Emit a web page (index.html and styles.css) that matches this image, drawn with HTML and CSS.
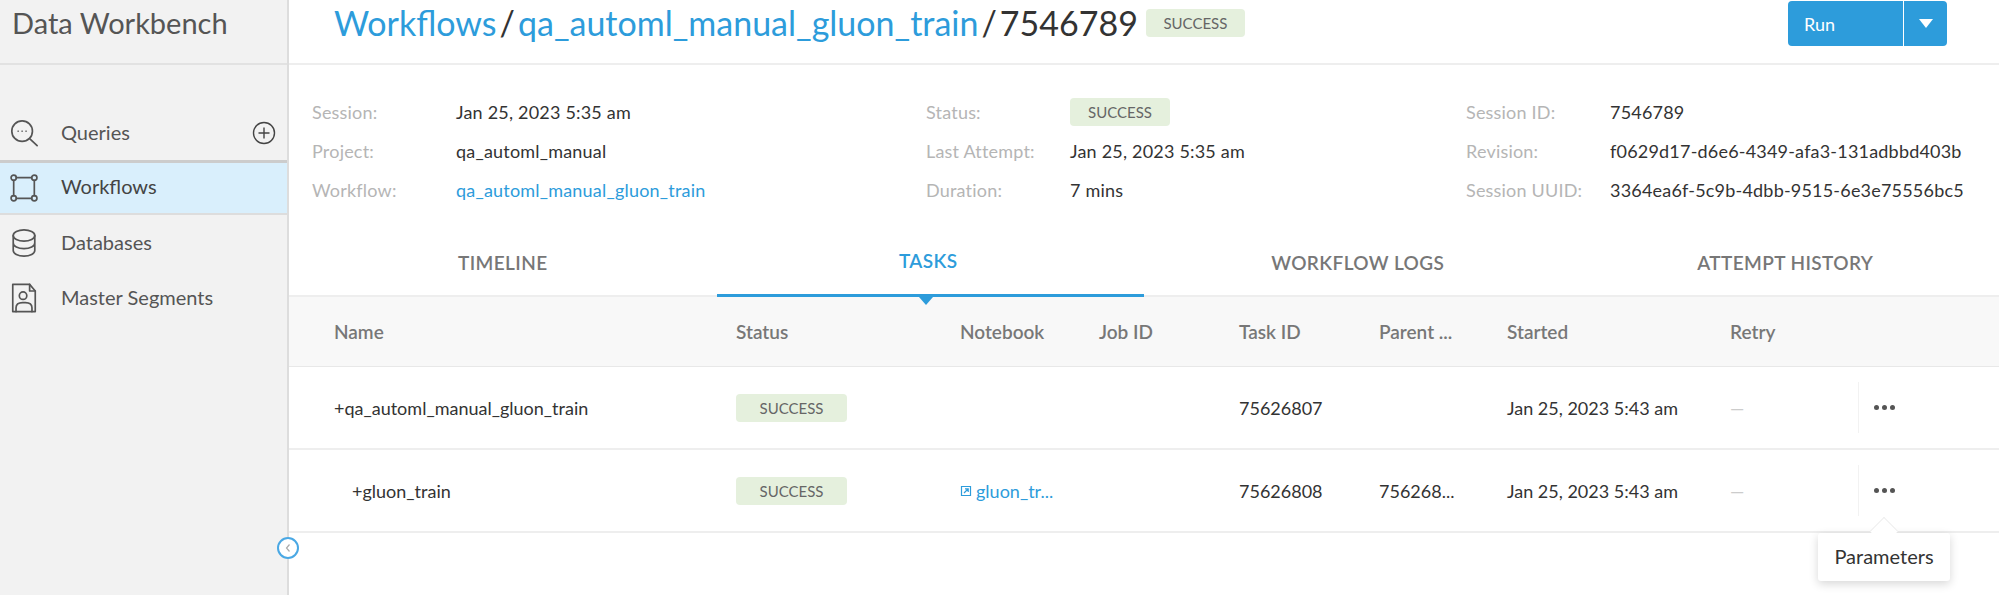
FILE: index.html
```html
<!DOCTYPE html>
<html>
<head>
  <meta charset="utf-8">
  <title>Data Workbench</title>
  <link rel="stylesheet" href="styles.css">
</head>
<body>
  <div class="app">
    <aside class="sidebar">
      <div class="brand">Data Workbench</div>
      <nav class="nav">
        <a class="nav-item">
          <svg class="nav-icon" viewBox="0 0 32 32"><circle cx="14" cy="14" r="11"/><path d="M22 22l8 7.500"/><path class="dots" d="M9.500 14h.6M13.700 14h.6M17.900 14h.6"/></svg>
          <span>Queries</span>
          <svg class="nav-add" viewBox="0 0 24 24"><circle cx="12" cy="12" r="10.500"/><path d="M12 6.500v11M6.500 12h11"/></svg>
        </a>
        <a class="nav-item active">
          <svg class="nav-icon" viewBox="0 0 32 32"><circle cx="5" cy="5" r="2.800"/><circle cx="27" cy="5" r="2.800"/><circle cx="5" cy="27" r="2.800"/><circle cx="27" cy="27" r="2.800"/><path d="M7.800 5h16.400M5 7.800v16.400M27 7.800v16.400M7.800 27h16.400"/></svg>
          <span>Workflows</span>
        </a>
        <a class="nav-item">
          <svg class="nav-icon" viewBox="0 0 32 32"><ellipse cx="16" cy="8" rx="11.500" ry="6"/><path d="M4.500 8v16c0 3.300 5 6 11.500 6s11.500-2.700 11.500-6V8M4.500 16c0 3.300 5 6 11.500 6s11.500-2.700 11.500-6"/></svg>
          <span>Databases</span>
        </a>
        <a class="nav-item">
          <svg class="nav-icon" viewBox="0 0 32 32"><path d="M4 1.500h18l6 7v22H4z"/><path d="M22 1.500v7h6"/><circle cx="15" cy="13.500" r="4"/><path d="M7.500 30.500v-4c0-3.500 3-5.500 7-5.500h3c4 0 7 2 7 5.500v4"/></svg>
          <span>Master Segments</span>
        </a>
      </nav>
      <button class="collapse"><svg viewBox="0 0 8 10"><path d="M5.500 1.500L2.500 5l3 3.500"/></svg></button>
    </aside>

    <main class="main">
      <header class="topbar">
        <h1 class="crumbs">
          <a>Workflows</a><span class="sep">/</span><a>qa_automl_manual_gluon_train</a><span class="sep">/</span><span>7546789</span>
        </h1>
        <span class="badge badge-title">SUCCESS</span>
        <div class="run">
          <span class="run-label">Run</span>
          <span class="run-caret"></span>
        </div>
      </header>

      <section class="details">
        <dl class="detail-col">
          <dt>Session:</dt><dd>Jan 25, 2023 5:35 am</dd>
          <dt>Project:</dt><dd>qa_automl_manual</dd>
          <dt>Workflow:</dt><dd><a>qa_automl_manual_gluon_train</a></dd>
        </dl>
        <dl class="detail-col">
          <dt>Status:</dt><dd><span class="badge badge-status">SUCCESS</span></dd>
          <dt>Last Attempt:</dt><dd>Jan 25, 2023 5:35 am</dd>
          <dt>Duration:</dt><dd>7 mins</dd>
        </dl>
        <dl class="detail-col">
          <dt>Session ID:</dt><dd>7546789</dd>
          <dt>Revision:</dt><dd>f0629d17-d6e6-4349-afa3-131adbbd403b</dd>
          <dt>Session UUID:</dt><dd>3364ea6f-5c9b-4dbb-9515-6e3e75556bc5</dd>
        </dl>
      </section>

      <div class="tabs">
        <div class="tab">TIMELINE</div>
        <div class="tab active">TASKS</div>
        <div class="tab">WORKFLOW LOGS</div>
        <div class="tab">ATTEMPT HISTORY</div>
      </div>

      <div class="row head">
        <div>Name</div><div>Status</div><div>Notebook</div><div>Job ID</div><div>Task ID</div><div>Parent ...</div><div>Started</div><div>Retry</div><div></div>
      </div>
      <div class="row">
        <div>+qa_automl_manual_gluon_train</div>
        <div><span class="badge">SUCCESS</span></div>
        <div></div>
        <div></div>
        <div>75626807</div>
        <div></div>
        <div>Jan 25, 2023 5:43 am</div>
        <div class="dash">—</div>
        <div class="more"><i></i><i></i><i></i></div>
      </div>
      <div class="row">
        <div class="child">+gluon_train</div>
        <div><span class="badge">SUCCESS</span></div>
        <div class="notebook">
          <svg viewBox="0 0 12 12"><path d="M1.500 1.500h9v9h-9z"/><path d="M4 8l4-4M5 3.800h3.200V7"/></svg>
          <a>gluon_tr...</a>
        </div>
        <div></div>
        <div>75626808</div>
        <div>756268...</div>
        <div>Jan 25, 2023 5:43 am</div>
        <div class="dash">—</div>
        <div class="more"><i></i><i></i><i></i></div>
      </div>

      <div class="popover">
        <span class="popover-arrow"></span>
        Parameters
      </div>
    </main>
  </div>
</body>
</html>
```
FILE: styles.css
```css
* {
  box-sizing: border-box;
}
html, body {
  margin: 0;
  padding: 0;
  height: 100%;
  overflow: hidden;
  background: #fff;
}
body {
  font-family: "Lato", "Open Sans", "Liberation Sans", sans-serif;
  font-size: 18px;
  color: #333;
}
a {
  color: #2d9cdb;
  text-decoration: none;
}
.app {
  display: flex;
  height: 595px;
}

/* sidebar */
.sidebar {
  position: relative;
  flex: 0 0 289px;
  background: #f2f2f2;
  border-right: 2px solid #ddd;
}
.brand {
  height: 65px;
  padding: 7px 0 0 12px;
  font-size: 29px;
  line-height: 32px;
  color: #555;
  border-bottom: 2px solid #e2e2e2;
}
.nav {
  margin-top: 40px;
}
.nav-item {
  display: flex;
  align-items: center;
  height: 55px;
  padding-left: 9px;
  font-size: 20px;
  color: #555;
}
.nav-item span {
  margin-top: -2px;
}
.nav-item.active {
  background: #d9effc;
  color: #444;
  border-top: 3px solid #ccc;
  border-bottom: 2px solid #ddd;
}
.nav-item.active span {
  margin-top: -4px;
}
.nav-icon {
  flex: 0 0 30px;
  width: 30px;
  height: 30px;
  margin-right: 22px;
  fill: none;
  stroke: #555;
  stroke-width: 1.800;
  stroke-linecap: round;
  stroke-linejoin: round;
}
.nav-icon .dots {
  stroke-width: 1.300;
}
.nav-add {
  width: 24px;
  height: 24px;
  margin-left: auto;
  margin-right: 11px;
  fill: none;
  stroke: #444;
  stroke-width: 1.400;
}
.collapse {
  position: absolute;
  top: 537px;
  right: -12px;
  width: 22px;
  height: 22px;
  padding: 0;
  background: #fff;
  border: 2px solid #4aa8e4;
  border-radius: 50%;
  display: flex;
  align-items: center;
  justify-content: center;
}
.collapse svg {
  width: 8px;
  height: 10px;
  fill: none;
  stroke: #aaa;
  stroke-width: 1.200;
}

/* top bar */
.main {
  position: relative;
  flex: 1;
  min-width: 0;
}
.topbar {
  display: flex;
  align-items: flex-start;
  height: 65px;
  padding: 1px 52px 0 45px;
  border-bottom: 2px solid #eee;
}
.crumbs {
  margin: 0;
  font-size: 34px;
  line-height: 44px;
  font-weight: 400;
  color: #333;
}
.crumbs a {
  color: #2d9cdb;
}
.sep {
  margin: 0 3px;
}
.badge {
  display: inline-block;
  width: 111px;
  height: 28px;
  line-height: 28px;
  text-align: center;
  font-size: 15px;
  color: #666;
  background: #e5f0dd;
  border-radius: 4px;
}
.badge-title {
  width: 99px;
  margin: 8px 0 0 8px;
}
.badge-status {
  width: 100px;
}
.run {
  display: flex;
  align-items: center;
  width: 159px;
  height: 45px;
  margin-left: auto;
  color: #fff;
  background: #2d9cdb;
  border-radius: 4px;
  font-size: 18px;
}
.run-label {
  flex: 1;
  padding-left: 16px;
}
.run-caret {
  position: relative;
  flex: 0 0 44px;
  height: 100%;
  border-left: 1px solid #fff;
}
.run-caret::after {
  content: "";
  position: absolute;
  top: 18px;
  left: 15px;
  border-left: 7px solid transparent;
  border-right: 7px solid transparent;
  border-top: 9px solid #fff;
}

/* session details */
.details {
  display: grid;
  grid-template-columns: 614px 540px 1fr;
  height: 231px;
  padding: 28px 0 0 23px;
}
.detail-col {
  display: grid;
  grid-template-columns: 144px 1fr;
  grid-template-rows: 38px 39px 39px;
  align-items: center;
  margin: 0;
}
.detail-col dt {
  color: #b5b5b5;
  font-size: 18px;
  letter-spacing: 0.2px;
}
.detail-col dd {
  margin: 0;
  font-size: 18px;
  letter-spacing: 0.2px;
}
.detail-col .badge {
  letter-spacing: 0;
  vertical-align: middle;
}

/* tabs */
.tabs {
  display: grid;
  grid-template-columns: repeat(4, 1fr);
  height: 66px;
  margin-top: -65px;
  border-bottom: 2px solid #eee;
}
.tab {
  text-align: center;
  padding-top: 20px;
  font-size: 19px;
  font-weight: 600;
  letter-spacing: 0.4px;
  color: #777;
}
.tab.active {
  position: relative;
  padding-top: 18px;
  padding-right: 4px;
  color: #2d9cdb;
  height: 66px;
  border-bottom: 3px solid #2d9cdb;
}
.tab.active::after {
  content: "";
  position: absolute;
  bottom: -11px;
  left: 50%;
  margin-left: -11px;
  border-left: 7px solid transparent;
  border-right: 7px solid transparent;
  border-top: 8px solid #2d9cdb;
}

/* task table */
.row {
  display: grid;
  grid-template-columns: 402px 224px 139px 140px 140px 128px 223px 128px 1fr;
  align-items: center;
  height: 83px;
  padding-left: 45px;
  font-size: 18px;
  border-bottom: 2px solid #eee;
}
.row.head {
  height: 70px;
  background: #f8f8f8;
  color: #777;
  font-size: 19px;
  font-weight: 600;
  border-bottom: 1px solid #e8e8e8;
}
.child {
  padding-left: 18px;
}
.notebook {
  display: flex;
  align-items: center;
  gap: 4px;
}
.notebook svg {
  width: 12px;
  height: 12px;
  fill: none;
  stroke: #2d9cdb;
  stroke-width: 1.200;
}
.dash {
  color: #ccc;
}
.more {
  display: flex;
  gap: 3px;
  align-items: center;
  justify-content: center;
  height: 51px;
  width: 52px;
  border-left: 1px solid #f2f2f2;
}
.more i {
  width: 5px;
  height: 5px;
  border-radius: 50%;
  background: #555;
}
.popover {
  position: absolute;
  top: 533px;
  left: 1529px;
  width: 132px;
  height: 48px;
  line-height: 46px;
  text-align: center;
  font-size: 20px;
  color: #333;
  background: #fff;
  border-radius: 3px;
  box-shadow: 0 3px 10px rgba(0, 0, 0, 0.16);
}
.popover-arrow {
  position: absolute;
  top: -12px;
  left: 56px;
  width: 20px;
  height: 20px;
  background: #fff;
  transform: rotate(45deg);
  border-left: 1px solid #eee;
  border-top: 1px solid #eee;
}
```
